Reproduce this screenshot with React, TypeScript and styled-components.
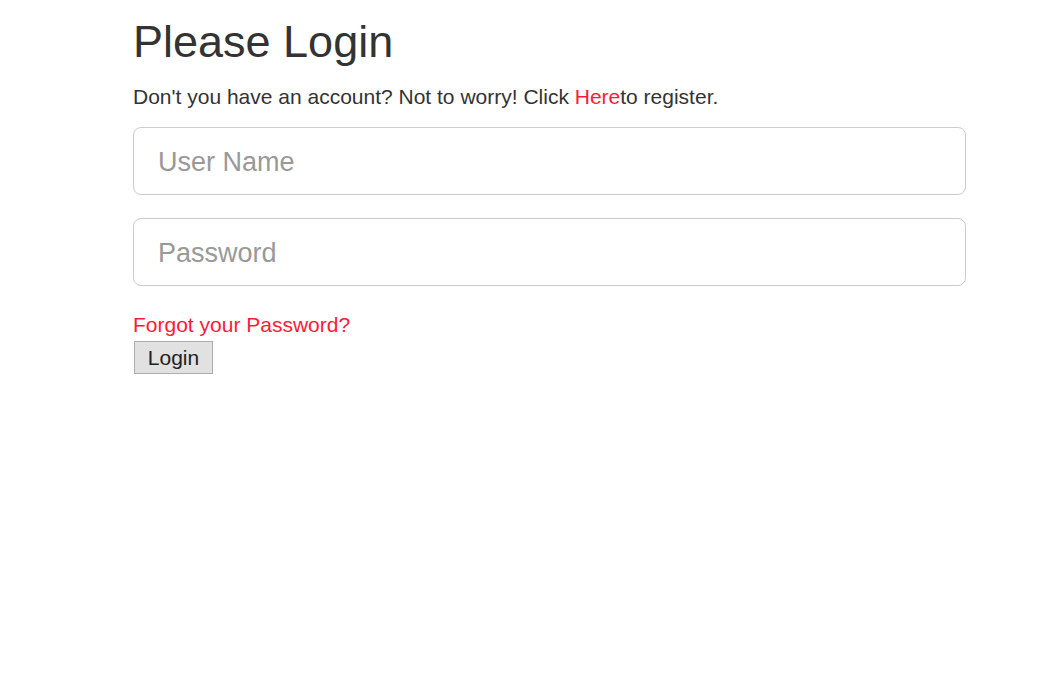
import React from "react";
import styled, { createGlobalStyle } from "styled-components";

const Global = createGlobalStyle`
  html, body { margin: 0; padding: 0; background: #fff; }
  body {
    font-family: "Liberation Sans", Arial, Helvetica, sans-serif;
    color: #333;
  }
  * { box-sizing: border-box; }
`;

const Page = styled.div`
  width: 1050px;
  padding: 17px 0 0 133px;
`;

const Form = styled.form`
  width: 833px;
  display: flex;
  flex-direction: column;
`;

const Title = styled.h1`
  margin: 0 0 15px;
  font-size: 45px;
  font-weight: 400;
  line-height: 1.1;
  color: #333;
`;

const Lead = styled.p`
  margin: 0 0 15px;
  font-size: 21px;
  line-height: 30px;
`;

const RedLink = styled.a`
  color: #ff1a36;
  text-decoration: none;
  cursor: pointer;
`;

const Field = styled.input`
  display: block;
  width: 100%;
  height: 68px;
  margin: 0 0 ${(p: { $gap: number }) => p.$gap}px;
  padding: 3px 24px 0;
  font-family: inherit;
  font-size: 27px;
  color: #555;
  border: 1px solid #ccc;
  border-radius: 8px;
  background: #fff;
  outline: none;
  &::placeholder { color: #999; }
`;

const Forgot = styled(RedLink)`
  display: block;
  font-size: 21px;
  line-height: 30px;
`;

const Button = styled.button`
  align-self: flex-start;
  width: 79px;
  height: 33px;
  margin: 1px 0 0 1px;
  padding: 1px 0 0;
  font-family: inherit;
  font-size: 21px;
  color: #222;
  background: #e1e1e1;
  border: 1px solid #adadad;
  border-radius: 0;
`;

export default function App() {
  return (
    <Page>
      <Global />
      <Form onSubmit={(e) => e.preventDefault()}>
        <Title>Please Login</Title>
        <Lead>
          Don't you have an account? Not to worry! Click <RedLink>Here</RedLink>to register.
        </Lead>
        <Field $gap={23} type="text" placeholder="User Name" />
        <Field $gap={24} type="password" placeholder="Password" />
        <Forgot>Forgot your Password?</Forgot>
        <Button type="submit">Login</Button>
      </Form>
    </Page>
  );
}
